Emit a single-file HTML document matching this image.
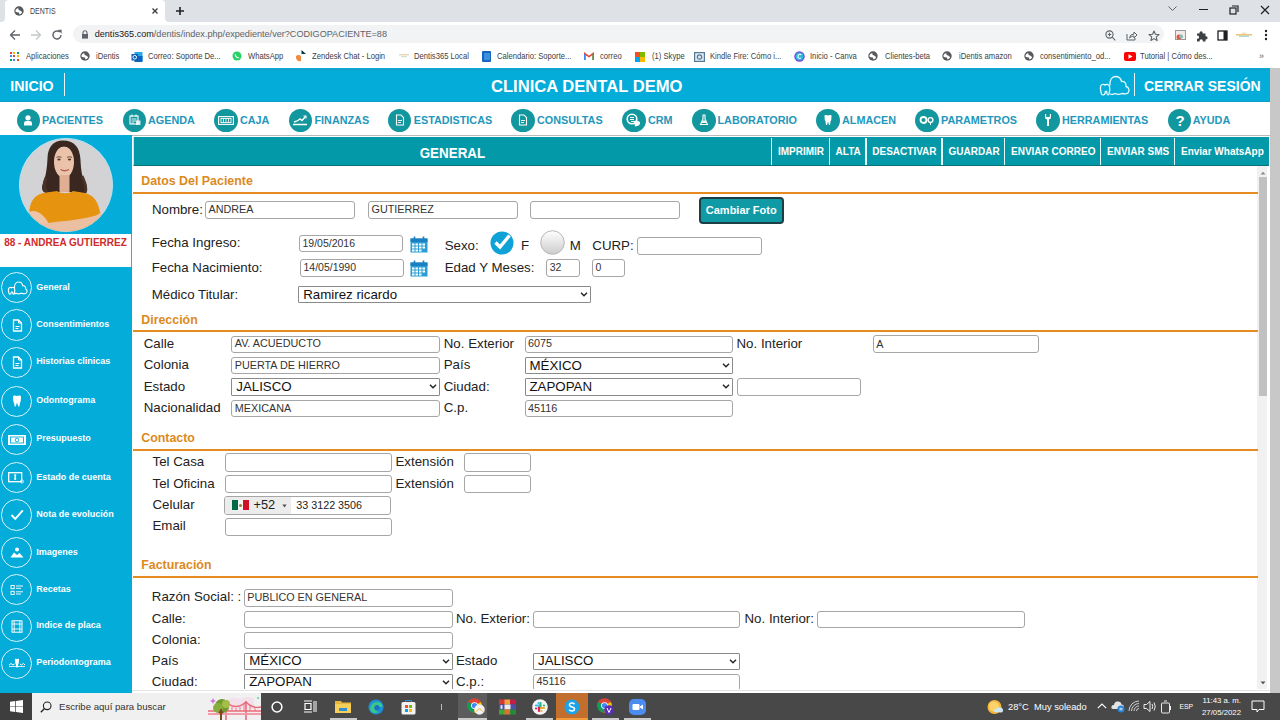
<!DOCTYPE html>
<html><head><meta charset="utf-8"><title>DENTIS</title>
<style>
html,body{margin:0;padding:0;width:1280px;height:720px;overflow:hidden;background:#fff;position:relative}
.a{position:absolute}
.t{position:absolute;white-space:nowrap;line-height:1;font-family:"Liberation Sans",sans-serif}
.inp{position:absolute;box-sizing:border-box;border:1px solid #a6a6a6;border-radius:3px;background:#fff}
.sel{position:absolute;box-sizing:border-box;border:1px solid #8a8a8a;border-radius:1px;background:#fff}
svg{overflow:visible}
</style></head><body>
<div class="a" style="left:0.00px;top:0.00px;width:1280.00px;height:22.00px;background:#dee1e6"></div>
<div class="a" style="left:1.00px;top:17.00px;width:168.00px;height:5.00px;background:#fff"></div>
<div class="a" style="left:0.00px;top:0.00px;width:5.00px;height:22.00px;background:#dee1e6;border-bottom-right-radius:4px"></div>
<div class="a" style="left:165.00px;top:0.00px;width:115.00px;height:22.00px;background:#dee1e6;border-bottom-left-radius:4px"></div>
<div class="a" style="left:5.00px;top:0.00px;width:160.00px;height:22.00px;background:#fff;border-radius:4px 4px 0 0"></div>
<svg class="a" style="left:13.5px;top:6px" width="10" height="10" viewBox="0 0 10 10"><circle cx="5" cy="5" r="4.7" fill="#55585c"/><path d="M1.6 4Q3 1.8 4.3 2.3L4.7 4Q6.9 4.3 8.2 6.3Q7.3 8.3 5.6 8.6L4.8 6.4Q2.8 6.2 1.4 5.4Z" fill="#fff"/></svg>
<div class="t" style="left:29.60px;top:6.75px;font-size:8.3px;color:#3c4043;transform:scaleX(0.84);transform-origin:0 0">DENTIS</div>
<svg class="a" style="left:151.6px;top:8.25px" width="6" height="6" viewBox="0 0 6 6"><path d="M0.5 0.5L5.5 5.5M5.5 0.5L0.5 5.5" stroke="#3c4043" stroke-width="1.4"/></svg>
<svg class="a" style="left:176px;top:7.25px" width="8" height="8" viewBox="0 0 8 8"><path d="M4 0V8M0 4H8" stroke="#202124" stroke-width="1.6"/></svg>
<svg class="a" style="left:1168px;top:6px" width="9" height="6" viewBox="0 0 9 6"><path d="M0.5 0.5L4.5 4.5L8.5 0.5" stroke="#5f6368" stroke-width="1" fill="none"/></svg>
<div class="a" style="left:1199.00px;top:9.00px;width:9.00px;height:1.20px;background:#202124"></div>
<svg class="a" style="left:1229px;top:5px" width="10" height="10" viewBox="0 0 10 10"><rect x="1" y="3" width="6" height="6" fill="none" stroke="#202124" stroke-width="1.2"/><path d="M3 1H9V7" fill="none" stroke="#202124" stroke-width="1.2"/></svg>
<svg class="a" style="left:1259.5px;top:4.5px" width="10" height="10" viewBox="0 0 10 10"><path d="M1 1L9 9M9 1L1 9" stroke="#202124" stroke-width="1.2"/></svg>
<div class="a" style="left:0.00px;top:22.00px;width:1280.00px;height:24.00px;background:#fff"></div>
<svg class="a" style="left:9px;top:29px" width="12" height="12" viewBox="0 0 12 12"><path d="M11 6H1.5M6 1.5L1.5 6L6 10.5" stroke="#5f6368" stroke-width="1.3" fill="none"/></svg>
<svg class="a" style="left:30px;top:29px" width="12" height="12" viewBox="0 0 12 12"><path d="M1 6H10.5M6 1.5L10.5 6L6 10.5" stroke="#c4c7c9" stroke-width="1.3" fill="none"/></svg>
<svg class="a" style="left:51px;top:29px" width="12" height="12" viewBox="0 0 12 12"><path d="M10 6A4 4 0 1 1 8.8 3.1" stroke="#5f6368" stroke-width="1.4" fill="none"/><path d="M6.8 0.8H10.6V4.6Z" fill="#5f6368"/></svg>
<div class="a" style="left:73.00px;top:25.30px;width:1091.00px;height:18.20px;background:#f1f3f4;border-radius:9px"></div>
<svg class="a" style="left:81px;top:30px" width="8" height="9" viewBox="0 0 8 9"><path d="M2 4V2.8A2 2 0 0 1 6 2.8V4" stroke="#5f6368" stroke-width="1.1" fill="none"/><rect x="1" y="4" width="6" height="4.6" fill="#5f6368"/></svg>
<div class="t" style="left:94.7px;top:29.6px;font-size:9.1px;color:#5f6368;letter-spacing:0px"><span style="color:#202124">dentis365.com</span>/dentis/index.php/expediente/ver?CODIGOPACIENTE=88</div>
<svg class="a" style="left:1105px;top:30px" width="11" height="11" viewBox="0 0 11 11"><circle cx="4.5" cy="4.5" r="3.6" stroke="#5f6368" stroke-width="1.1" fill="none"/><path d="M7.2 7.2L10.3 10.3M4.5 2.8V6.2M2.8 4.5H6.2" stroke="#5f6368" stroke-width="1.1"/></svg>
<svg class="a" style="left:1126px;top:30px" width="12" height="11" viewBox="0 0 12 11"><path d="M1 4V10H9V8" stroke="#5f6368" stroke-width="1" fill="none"/><path d="M3.5 8Q4 4 8 4V2L11 5L8 8V6Q5.5 6 3.5 8Z" stroke="#5f6368" stroke-width="1" fill="none"/></svg>
<svg class="a" style="left:1147.5px;top:29.5px" width="12" height="12" viewBox="0 0 12 12"><path d="M6 1L7.4 4.3L11 4.6L8.3 6.9L9.1 10.5L6 8.6L2.9 10.5L3.7 6.9L1 4.6L4.6 4.3Z" stroke="#5f6368" stroke-width="1.1" fill="none" stroke-linejoin="round"/></svg>
<svg class="a" style="left:1175px;top:30px" width="11" height="10" viewBox="0 0 11 10"><rect x="0.5" y="0.5" width="10" height="9" fill="#f3e9e6" stroke="#9a9a9a"/><circle cx="4" cy="7" r="2.5" fill="#e0553a"/><circle cx="6" cy="6.5" r="2" fill="#8bb"/></svg>
<svg class="a" style="left:1195.5px;top:29.5px" width="12" height="12" viewBox="0 0 12 12"><path d="M1 3.5H3.5V2.8A1.6 1.6 0 0 1 6.7 2.8V3.5H9.5V6.2H10A1.6 1.6 0 0 1 10 9.4H9.5V11.5H6.8V10.8A1.6 1.6 0 0 0 3.6 10.8V11.5H1V8.8H1.5A1.6 1.6 0 0 0 1.5 5.6H1Z" fill="#3c4043"/></svg>
<svg class="a" style="left:1217px;top:30px" width="11" height="11" viewBox="0 0 11 11"><rect x="1" y="1" width="9" height="9" fill="none" stroke="#202124" stroke-width="1.3"/><rect x="6.5" y="1" width="3.5" height="9" fill="#202124"/></svg>
<svg class="a" style="left:1236px;top:32px" width="16" height="6" viewBox="0 0 16 6"><rect x="0" y="2" width="16" height="1.6" fill="#f0c27a"/><rect x="3" y="3.6" width="10" height="1.2" fill="#9fd3c7"/><rect x="6" y="0.5" width="4" height="1.5" fill="#f5e0b0"/></svg>
<svg class="a" style="left:1263.5px;top:29px" width="4" height="12" viewBox="0 0 4 12"><circle cx="2" cy="2" r="1.2" fill="#202124"/><circle cx="2" cy="6" r="1.2" fill="#202124"/><circle cx="2" cy="10" r="1.2" fill="#202124"/></svg>
<div class="a" style="left:0.00px;top:46.00px;width:1280.00px;height:22.00px;background:#fff"></div>
<div class="a" style="left:10.00px;top:52.00px;width:2.20px;height:2.20px;background:#db4437"></div>
<div class="a" style="left:13.30px;top:52.00px;width:2.20px;height:2.20px;background:#f4b400"></div>
<div class="a" style="left:16.60px;top:52.00px;width:2.20px;height:2.20px;background:#0f9d58"></div>
<div class="a" style="left:10.00px;top:55.30px;width:2.20px;height:2.20px;background:#4285f4"></div>
<div class="a" style="left:13.30px;top:55.30px;width:2.20px;height:2.20px;background:#db4437"></div>
<div class="a" style="left:16.60px;top:55.30px;width:2.20px;height:2.20px;background:#f4b400"></div>
<div class="a" style="left:10.00px;top:58.60px;width:2.20px;height:2.20px;background:#0f9d58"></div>
<div class="a" style="left:13.30px;top:58.60px;width:2.20px;height:2.20px;background:#4285f4"></div>
<div class="a" style="left:16.60px;top:58.60px;width:2.20px;height:2.20px;background:#db4437"></div>
<div class="t" style="left:25.75px;top:52.11px;font-size:8.6px;color:#3c4043;transform:scaleX(0.89);transform-origin:0 0">Aplicaciones</div>
<svg class="a" style="left:79.8px;top:50.8px" width="10" height="10" viewBox="0 0 10 10"><circle cx="5" cy="5" r="4.7" fill="#55585c"/><path d="M1.6 4Q3 1.8 4.3 2.3L4.7 4Q6.9 4.3 8.2 6.3Q7.3 8.3 5.6 8.6L4.8 6.4Q2.8 6.2 1.4 5.4Z" fill="#fff"/></svg>
<div class="t" style="left:96.25px;top:52.11px;font-size:8.6px;color:#3c4043;transform:scaleX(0.89);transform-origin:0 0">iDentis</div>
<svg class="a" style="left:130.5px;top:50.5px" width="12" height="12" viewBox="0 0 12 12"><rect x="3.5" y="1" width="8" height="9" fill="#28a8ea"/><rect x="3.5" y="5" width="8" height="6" fill="#0a64c0"/><rect x="0.5" y="3" width="6.5" height="6.5" fill="#0f5fb0"/><circle cx="3.75" cy="6.25" r="1.8" fill="none" stroke="#fff" stroke-width="1"/></svg>
<div class="t" style="left:147.50px;top:52.11px;font-size:8.6px;color:#3c4043;transform:scaleX(0.89);transform-origin:0 0">Correo: Soporte De...</div>
<svg class="a" style="left:232px;top:51px" width="10" height="10" viewBox="0 0 10 10"><circle cx="5" cy="5" r="4.5" fill="#25d366"/><path d="M3.3 3.2Q3.5 6.5 6.8 6.8" stroke="#fff" stroke-width="1.2" fill="none"/></svg>
<div class="t" style="left:248.25px;top:52.11px;font-size:8.6px;color:#3c4043;transform:scaleX(0.89);transform-origin:0 0">WhatsApp</div>
<svg class="a" style="left:296px;top:50px" width="11" height="12" viewBox="0 0 11 12"><path d="M0 6A4 4 0 0 1 5 6V11A4 4 0 0 1 0 6Z" fill="#f08a3c"/><path d="M5.5 0L10 4H5.5Z" fill="#03363d"/></svg>
<div class="t" style="left:312.00px;top:52.11px;font-size:8.6px;color:#3c4043;transform:scaleX(0.89);transform-origin:0 0">Zendesk Chat - Login</div>
<svg class="a" style="left:399px;top:53px" width="10" height="6" viewBox="0 0 10 6"><rect y="1" width="10" height="1.5" fill="#e8d9b8"/><rect x="2" y="3" width="6" height="1.2" fill="#cfe0d5"/></svg>
<div class="t" style="left:414.20px;top:52.11px;font-size:8.6px;color:#3c4043;transform:scaleX(0.89);transform-origin:0 0">Dentis365 Local</div>
<div class="a" style="left:482.00px;top:51.00px;width:9.00px;height:11.00px;background:#1565c0;border-radius:1px"></div>
<div class="a" style="left:484.00px;top:53.00px;width:6.00px;height:7.00px;background:#3b8fe0"></div>
<div class="t" style="left:496.50px;top:52.11px;font-size:8.6px;color:#3c4043;transform:scaleX(0.89);transform-origin:0 0">Calendario: Soporte...</div>
<svg class="a" style="left:584px;top:52px" width="10" height="8" viewBox="0 0 10 8"><path d="M0.8 8V1.5L5 4.6L9.2 1.5V8" stroke="#ea4335" stroke-width="1.6" fill="none"/><path d="M0.8 8V2" stroke="#4285f4" stroke-width="1.6"/><path d="M9.2 8V2" stroke="#34a853" stroke-width="1.6"/></svg>
<div class="t" style="left:599.60px;top:52.11px;font-size:8.6px;color:#3c4043;transform:scaleX(0.89);transform-origin:0 0">correo</div>
<div class="a" style="left:634.60px;top:51.50px;width:5.00px;height:5.00px;background:#f25022"></div>
<div class="a" style="left:640.00px;top:51.50px;width:5.00px;height:5.00px;background:#7fba00"></div>
<div class="a" style="left:634.60px;top:56.90px;width:5.00px;height:5.00px;background:#00a4ef"></div>
<div class="a" style="left:640.00px;top:56.90px;width:5.00px;height:5.00px;background:#ffb900"></div>
<div class="t" style="left:651.90px;top:52.11px;font-size:8.6px;color:#3c4043;transform:scaleX(0.89);transform-origin:0 0">(1) Skype</div>
<svg class="a" style="left:694px;top:51px" width="11" height="11" viewBox="0 0 11 11"><rect x="0.6" y="1.6" width="9.8" height="8.8" fill="#dfeaf2" stroke="#557a95" stroke-width="1.2"/><circle cx="5.5" cy="6" r="2.2" fill="none" stroke="#557a95" stroke-width="1.2"/></svg>
<div class="t" style="left:710.40px;top:52.11px;font-size:8.6px;color:#3c4043;transform:scaleX(0.89);transform-origin:0 0">Kindle Fire: Cómo i...</div>
<svg class="a" style="left:793.5px;top:51px" width="11" height="11" viewBox="0 0 11 11"><circle cx="5.5" cy="5.5" r="5.2" fill="#7d3fe0"/><circle cx="5.5" cy="5.5" r="4" fill="#2bb7d9"/><path d="M7.3 4Q6.5 3 5.3 3.3Q3.6 4 4 6.5Q5 8 7 7" stroke="#fff" stroke-width="1.1" fill="none"/></svg>
<div class="t" style="left:810.00px;top:52.11px;font-size:8.6px;color:#3c4043;transform:scaleX(0.89);transform-origin:0 0">Inicio - Canva</div>
<svg class="a" style="left:867.6999999999999px;top:50.8px" width="10" height="10" viewBox="0 0 10 10"><circle cx="5" cy="5" r="4.7" fill="#55585c"/><path d="M1.6 4Q3 1.8 4.3 2.3L4.7 4Q6.9 4.3 8.2 6.3Q7.3 8.3 5.6 8.6L4.8 6.4Q2.8 6.2 1.4 5.4Z" fill="#fff"/></svg>
<div class="t" style="left:884.60px;top:52.11px;font-size:8.6px;color:#3c4043;transform:scaleX(0.89);transform-origin:0 0">Clientes-beta</div>
<svg class="a" style="left:942.3px;top:50.8px" width="10" height="10" viewBox="0 0 10 10"><circle cx="5" cy="5" r="4.7" fill="#55585c"/><path d="M1.6 4Q3 1.8 4.3 2.3L4.7 4Q6.9 4.3 8.2 6.3Q7.3 8.3 5.6 8.6L4.8 6.4Q2.8 6.2 1.4 5.4Z" fill="#fff"/></svg>
<div class="t" style="left:959.00px;top:52.11px;font-size:8.6px;color:#3c4043;transform:scaleX(0.89);transform-origin:0 0">iDentis amazon</div>
<svg class="a" style="left:1023.8px;top:50.8px" width="10" height="10" viewBox="0 0 10 10"><circle cx="5" cy="5" r="4.7" fill="#55585c"/><path d="M1.6 4Q3 1.8 4.3 2.3L4.7 4Q6.9 4.3 8.2 6.3Q7.3 8.3 5.6 8.6L4.8 6.4Q2.8 6.2 1.4 5.4Z" fill="#fff"/></svg>
<div class="t" style="left:1040.00px;top:52.11px;font-size:8.6px;color:#3c4043;transform:scaleX(0.89);transform-origin:0 0">consentimiento_od...</div>
<div class="a" style="left:1124.00px;top:52.00px;width:12.00px;height:9.00px;background:#f00;border-radius:2px"></div>
<svg class="a" style="left:1128px;top:54px" width="5" height="5" viewBox="0 0 5 5"><path d="M0.5 0.3L4.6 2.5L0.5 4.7Z" fill="#fff"/></svg>
<div class="t" style="left:1140.00px;top:52.11px;font-size:8.6px;color:#3c4043;transform:scaleX(0.89);transform-origin:0 0">Tutorial | Cómo des...</div>
<div class="t" style="left:1259.00px;top:52.15px;font-size:9px;color:#5f6368;">»</div>
<div class="a" style="left:1270.00px;top:68.00px;width:10.00px;height:625.00px;background:#c8c8c8"></div>
<div class="a" style="left:0.00px;top:68.00px;width:1270.00px;height:34.00px;background:#04acd9"></div>
<div class="a" style="left:0.00px;top:68.60px;width:1270.00px;height:1.00px;background:#1a9cc4"></div>
<div class="a" style="left:0.00px;top:101.00px;width:1270.00px;height:1.00px;background:#0d9cc4"></div>
<div class="t" style="left:10.30px;top:78.87px;font-size:14.2px;color:#fff;font-weight:bold;">INICIO</div>
<div class="a" style="left:64.10px;top:72.80px;width:1.30px;height:23.20px;background:#e8f7fc"></div>
<div class="t" style="left:491.00px;top:79.41px;font-size:16.6px;color:#fff;font-weight:bold;">CLINICA DENTAL DEMO</div>
<svg class="a" style="left:1098px;top:75px" width="32" height="22" viewBox="0 0 32 22"><path d="M12 10.5C11.5 4.5 14 1.5 17.5 1.5C21 1.5 23 4 23.5 6.5C26.5 6 28.5 8.5 28 11.5C31 12 32 16 30 18C28.5 19.5 26 19 24 18.5C22 19.5 19 19.5 17 18.5C15.5 19.5 13.5 19.5 12 19" stroke="#e9fbff" stroke-width="1.3" fill="none"/><path d="M3.5 19C2.3 15 2 12 3 10.5C4 9 6 9 7 10C8 9 10 9 11 10.5C12 12 12 15 11 19C10.5 20.3 9.3 20.3 9 18.5L8.6 16.5H7.4L7 18.5C6.6 20.3 4 20.3 3.5 19Z" stroke="#e9fbff" stroke-width="1.3" fill="none"/></svg>
<div class="a" style="left:1134.20px;top:72.80px;width:1.30px;height:23.20px;background:#e8f7fc"></div>
<div class="t" style="left:1144.00px;top:79.20px;font-size:14px;color:#fff;font-weight:bold;">CERRAR SESIÓN</div>
<div class="a" style="left:0.00px;top:102.00px;width:1270.00px;height:33.00px;background:#fff"></div>
<div class="a" style="left:132.00px;top:135.00px;width:1138.00px;height:1.00px;background:#b9b9b9"></div>
<div class="a" style="left:16.80px;top:108.60px;width:23.20px;height:23.20px;background:#12979f;border-radius:50%"></div>
<div class="t" style="left:42.00px;top:114.58px;font-size:10.8px;color:#2397bb;font-weight:bold;">PACIENTES</div>
<div class="a" style="left:123.00px;top:108.60px;width:23.20px;height:23.20px;background:#12979f;border-radius:50%"></div>
<div class="t" style="left:148.00px;top:114.58px;font-size:10.8px;color:#2397bb;font-weight:bold;">AGENDA</div>
<div class="a" style="left:214.40px;top:108.60px;width:23.20px;height:23.20px;background:#12979f;border-radius:50%"></div>
<div class="t" style="left:240.00px;top:114.58px;font-size:10.8px;color:#2397bb;font-weight:bold;">CAJA</div>
<div class="a" style="left:288.80px;top:108.60px;width:23.20px;height:23.20px;background:#12979f;border-radius:50%"></div>
<div class="t" style="left:314.50px;top:114.58px;font-size:10.8px;color:#2397bb;font-weight:bold;">FINANZAS</div>
<div class="a" style="left:388.00px;top:108.60px;width:23.20px;height:23.20px;background:#12979f;border-radius:50%"></div>
<div class="t" style="left:413.75px;top:114.58px;font-size:10.8px;color:#2397bb;font-weight:bold;">ESTADISTICAS</div>
<div class="a" style="left:511.40px;top:108.60px;width:23.20px;height:23.20px;background:#12979f;border-radius:50%"></div>
<div class="t" style="left:537.00px;top:114.58px;font-size:10.8px;color:#2397bb;font-weight:bold;">CONSULTAS</div>
<div class="a" style="left:622.40px;top:108.60px;width:23.20px;height:23.20px;background:#12979f;border-radius:50%"></div>
<div class="t" style="left:648.00px;top:114.58px;font-size:10.8px;color:#2397bb;font-weight:bold;">CRM</div>
<div class="a" style="left:692.40px;top:108.60px;width:23.20px;height:23.20px;background:#12979f;border-radius:50%"></div>
<div class="t" style="left:717.50px;top:114.58px;font-size:10.8px;color:#2397bb;font-weight:bold;">LABORATORIO</div>
<div class="a" style="left:816.40px;top:108.60px;width:23.20px;height:23.20px;background:#12979f;border-radius:50%"></div>
<div class="t" style="left:842.00px;top:114.58px;font-size:10.8px;color:#2397bb;font-weight:bold;">ALMACEN</div>
<div class="a" style="left:915.40px;top:108.60px;width:23.20px;height:23.20px;background:#12979f;border-radius:50%"></div>
<div class="t" style="left:941.00px;top:114.58px;font-size:10.8px;color:#2397bb;font-weight:bold;">PARAMETROS</div>
<div class="a" style="left:1036.40px;top:108.60px;width:23.20px;height:23.20px;background:#12979f;border-radius:50%"></div>
<div class="t" style="left:1062.00px;top:114.58px;font-size:10.8px;color:#2397bb;font-weight:bold;">HERRAMIENTAS</div>
<div class="a" style="left:1167.90px;top:108.60px;width:23.20px;height:23.20px;background:#12979f;border-radius:50%"></div>
<div class="t" style="left:1192.80px;top:114.58px;font-size:10.8px;color:#2397bb;font-weight:bold;">AYUDA</div>
<svg class="a" style="left:22.40px;top:114.20px" width="12" height="12" viewBox="0 0 12 12"><circle cx="6" cy="3.8" r="2.6" fill="#fff"/><path d="M2 11.5V9Q2 7 4.5 7H7.5Q10 7 10 9V11.5Z" fill="#fff"/></svg>
<svg class="a" style="left:128.60px;top:114.20px" width="12" height="12" viewBox="0 0 12 12"><rect x="1" y="2" width="8" height="8" fill="none" stroke="#fff" stroke-width="1.1"/><path d="M2.5 5H7.5M2.5 7H7.5M2.5 9H5" stroke="#fff" stroke-width="0.9"/><rect x="7" y="6.5" width="4.5" height="4.5" fill="#fff" opacity="0.8"/><path d="M3 0.5V3M7 0.5V3" stroke="#fff"/></svg>
<svg class="a" style="left:218.00px;top:115.70px" width="16" height="9" viewBox="0 0 16 9"><rect x="0.6" y="0.6" width="14.8" height="7.8" fill="none" stroke="#fff" stroke-width="1.1"/><rect x="3" y="2.4" width="10" height="4.2" fill="none" stroke="#fff" stroke-width="0.9"/><path d="M5.5 2.4V6.6M8 2.4V6.6M10.5 2.4V6.6" stroke="#fff" stroke-width="0.8"/></svg>
<svg class="a" style="left:292.40px;top:114.20px" width="16" height="12" viewBox="0 0 16 12"><path d="M1 10.5H15M2 8Q6 7 8 5L10 6.5L13.5 2.5" stroke="#fff" stroke-width="1.4" fill="none"/><path d="M11.5 2H14V4.5" stroke="#fff" stroke-width="1.1" fill="none"/></svg>
<svg class="a" style="left:394.60px;top:114.20px" width="10" height="12" viewBox="0 0 10 12"><path d="M1.5 1H6L8.5 3.5V11H1.5Z" fill="none" stroke="#fff" stroke-width="1.1"/><path d="M3 6.5H7M3 8.5H6" stroke="#fff" stroke-width="0.9"/></svg>
<svg class="a" style="left:518.00px;top:114.20px" width="10" height="12" viewBox="0 0 10 12"><path d="M1.5 1H6L8.5 3.5V11H1.5Z" fill="none" stroke="#fff" stroke-width="1.1"/><path d="M3 6.5H7M3 8.5H6" stroke="#fff" stroke-width="0.9"/></svg>
<svg class="a" style="left:626.00px;top:113.20px" width="16" height="14" viewBox="0 0 16 14"><circle cx="6" cy="6" r="4.8" fill="none" stroke="#fff" stroke-width="1.6"/><path d="M4 4.5H8M4 6.5H8M5 8.5H8" stroke="#fff" stroke-width="1"/><path d="M8 8Q11 6.5 14 9Q14.5 12.5 11 13L9 13.5Z" fill="#fff"/></svg>
<svg class="a" style="left:699.00px;top:114.20px" width="10" height="12" viewBox="0 0 10 12"><path d="M3.5 1H6.5M4 1.5V5L1.5 10.5H8.5L6 5V1.5" fill="none" stroke="#fff" stroke-width="1.1"/><path d="M2.5 9H7.5L6.2 6.5H3.8Z" fill="#fff"/></svg>
<svg class="a" style="left:823.00px;top:114.20px" width="10" height="12" viewBox="0 0 10 12"><path d="M1.5 2.5Q1 0.5 3 1Q5 1.8 7 1Q9 0.5 8.5 2.5Q8.5 6 7.5 7.5L7 11H6L5 7.5L4 11H3L2.5 7.5Q1.5 6 1.5 2.5Z" fill="#fff"/></svg>
<svg class="a" style="left:919.00px;top:114.20px" width="16" height="12" viewBox="0 0 16 12"><circle cx="4.5" cy="6" r="3" fill="none" stroke="#fff" stroke-width="1.8"/><circle cx="11.5" cy="6" r="2.4" fill="none" stroke="#fff" stroke-width="1.4"/><path d="M11.5 8.5V11" stroke="#fff" stroke-width="1"/></svg>
<svg class="a" style="left:1044.00px;top:113.20px" width="8" height="14" viewBox="0 0 8 14"><path d="M1 1L1 4Q1 6 3 6.5V13H5V6.5Q7 6 7 4V1L5.8 1V4H2.2V1Z" fill="#fff"/></svg>
<div class="t" style="left:1175.60px;top:112.55px;font-size:15px;color:#fff;font-weight:bold;">?</div>
<div class="a" style="left:0.00px;top:135.00px;width:131.50px;height:558.00px;background:#04acd9"></div>
<svg class="a" style="left:18.5px;top:138px" width="94" height="94" viewBox="0 0 94 94">
<defs><clipPath id="pc"><circle cx="47" cy="47" r="46.3"/></clipPath></defs>
<circle cx="47" cy="47" r="46.6" fill="#d3d3d5" stroke="#b3e1ef" stroke-width="1"/>
<g clip-path="url(#pc)">
<path d="M44 2.5C34 2.5 29 9 28.5 20C28 30 27 38 24 45C22 50 23 54 27 55L38 54L52 54L64 56C68 55 69 51 67 47C63 40 62 32 61.5 22C61 9 55 2.5 44 2.5Z" fill="#3a2720"/>
<path d="M27 40C24 46 25 52 29 55M63 38C66 45 68 50 66 55" stroke="#4a3226" stroke-width="3" fill="none"/>
<ellipse cx="45" cy="24" rx="10" ry="15.8" fill="#ebc3aa"/>
<path d="M33 21C33 8 38 3.5 45 3.5C52 3.5 57 8 57 21C55 12.5 50 8.5 45 8.5C40 8.5 35 12.5 33 21Z" fill="#3a2720"/>
<path d="M40.5 37H50.5V54H40.5Z" fill="#dfae93"/>
<ellipse cx="40" cy="21.5" rx="1.7" ry="1" fill="#5a3a30"/><ellipse cx="50.5" cy="21.5" rx="1.7" ry="1" fill="#5a3a30"/><path d="M37.5 19.3Q40 18.2 42.5 19.3M48 19.3Q50.5 18.2 53 19.3" stroke="#4a3026" stroke-width="0.8" fill="none"/>
<path d="M41.5 31.5Q45.5 34 50 31.5" stroke="#b5604f" stroke-width="1.3" fill="none"/>
<path d="M8 94L10 76C11 64 14 58 24 55L38 53C42 56 50 56 54 53L66 55C76 58 79 64 81 74L85 94Z" fill="#e6940f"/>
<path d="M10 74C15 71 24 74 30 86L28 94L8 94Z" fill="#eec5a8"/>
<path d="M24 86C36 83 56 83 71 79C77 78 81 76 82 73L85 94L24 94Z" fill="#ebc0a2"/>
</g></svg>
<div class="a" style="left:0.00px;top:233.70px;width:131.00px;height:33.00px;background:#fff;border-right:1px solid #8d8d8d"></div>
<div class="t" style="left:4.20px;top:238.10px;font-size:10px;color:#cf2b2b;font-weight:bold;">88 - ANDREA GUTIERREZ</div>
<div class="a" style="left:1.20px;top:272.00px;width:31.20px;height:31.20px;border:1.6px solid #d9f3fb;border-radius:50%;box-sizing:border-box"></div>
<div class="t" style="left:36.25px;top:282.65px;font-size:9px;color:#fff;font-weight:bold;">General</div>
<div class="a" style="left:1.20px;top:309.40px;width:31.20px;height:31.20px;border:1.6px solid #d9f3fb;border-radius:50%;box-sizing:border-box"></div>
<div class="t" style="left:36.25px;top:320.05px;font-size:9px;color:#fff;font-weight:bold;">Consentimientos</div>
<div class="a" style="left:1.20px;top:346.60px;width:31.20px;height:31.20px;border:1.6px solid #d9f3fb;border-radius:50%;box-sizing:border-box"></div>
<div class="t" style="left:36.25px;top:357.25px;font-size:9px;color:#fff;font-weight:bold;">Historias clinicas</div>
<div class="a" style="left:1.20px;top:385.50px;width:31.20px;height:31.20px;border:1.6px solid #d9f3fb;border-radius:50%;box-sizing:border-box"></div>
<div class="t" style="left:36.25px;top:396.15px;font-size:9px;color:#fff;font-weight:bold;">Odontograma</div>
<div class="a" style="left:1.20px;top:423.80px;width:31.20px;height:31.20px;border:1.6px solid #d9f3fb;border-radius:50%;box-sizing:border-box"></div>
<div class="t" style="left:36.25px;top:434.45px;font-size:9px;color:#fff;font-weight:bold;">Presupuesto</div>
<div class="a" style="left:1.20px;top:461.90px;width:31.20px;height:31.20px;border:1.6px solid #d9f3fb;border-radius:50%;box-sizing:border-box"></div>
<div class="t" style="left:36.25px;top:472.55px;font-size:9px;color:#fff;font-weight:bold;">Estado de cuenta</div>
<div class="a" style="left:1.20px;top:499.40px;width:31.20px;height:31.20px;border:1.6px solid #d9f3fb;border-radius:50%;box-sizing:border-box"></div>
<div class="t" style="left:36.25px;top:510.05px;font-size:9px;color:#fff;font-weight:bold;">Nota de evolución</div>
<div class="a" style="left:1.20px;top:536.90px;width:31.20px;height:31.20px;border:1.6px solid #d9f3fb;border-radius:50%;box-sizing:border-box"></div>
<div class="t" style="left:36.25px;top:547.55px;font-size:9px;color:#fff;font-weight:bold;">Imagenes</div>
<div class="a" style="left:1.20px;top:574.10px;width:31.20px;height:31.20px;border:1.6px solid #d9f3fb;border-radius:50%;box-sizing:border-box"></div>
<div class="t" style="left:36.25px;top:584.75px;font-size:9px;color:#fff;font-weight:bold;">Recetas</div>
<div class="a" style="left:1.20px;top:610.80px;width:31.20px;height:31.20px;border:1.6px solid #d9f3fb;border-radius:50%;box-sizing:border-box"></div>
<div class="t" style="left:36.25px;top:621.45px;font-size:9px;color:#fff;font-weight:bold;">Indice de placa</div>
<div class="a" style="left:1.20px;top:647.70px;width:31.20px;height:31.20px;border:1.6px solid #d9f3fb;border-radius:50%;box-sizing:border-box"></div>
<div class="t" style="left:36.25px;top:658.35px;font-size:9px;color:#fff;font-weight:bold;">Periodontograma</div>
<svg class="a" style="left:7.00px;top:280.60px" width="20" height="14" viewBox="0 0 20 14"><path d="M7.5 7C7.2 3 9 1 11.5 1C14 1 15.5 3 15.8 4.8C17.8 4.5 19 6 18.7 8C20.5 8.5 20.5 12 18.5 12.5C17 13 15.5 12.5 14 12.2C12.5 13 10.5 13 9 12.2C8.2 12.8 7.5 12.8 7 12.5" stroke="#fff" stroke-width="1.1" fill="none"/><path d="M2 12.5C1.2 10 1.2 8 2 7C2.7 6.2 4 6.2 4.5 6.8C5.2 6.2 6.5 6.2 7.2 7C8 8 8 10 7.2 12.5C6.8 13.5 6 13.3 5.8 12.3L5.4 11H4.4L4 12.3C3.7 13.3 2.5 13.5 2 12.5Z" stroke="#fff" stroke-width="1.1" fill="none"/></svg>
<svg class="a" style="left:11.50px;top:318.50px" width="11" height="13" viewBox="0 0 11 13"><path d="M1.5 1H6.5L9.5 4V12H1.5Z" fill="none" stroke="#fff" stroke-width="1.3"/><path d="M6.5 1V4H9.5" fill="none" stroke="#fff" stroke-width="1"/><path d="M3.5 7.5H7.5M3.5 9.5H6.5" stroke="#fff" stroke-width="1"/></svg>
<svg class="a" style="left:11.50px;top:355.70px" width="11" height="13" viewBox="0 0 11 13"><path d="M1.5 1H6.5L9.5 4V12H1.5Z" fill="none" stroke="#fff" stroke-width="1.3"/><path d="M6.5 1V4H9.5" fill="none" stroke="#fff" stroke-width="1"/><path d="M3.5 7.5H7.5M3.5 9.5H6.5" stroke="#fff" stroke-width="1"/></svg>
<svg class="a" style="left:11.50px;top:395.10px" width="10" height="12" viewBox="0 0 10 12"><path d="M1 2.5Q0.5 0.3 2.8 0.6Q5 1.5 7.2 0.6Q9.5 0.3 9 2.5Q9 6.5 8 8L7.3 11.5H6.3L5 7.5L3.7 11.5H2.7L2 8Q1 6.5 1 2.5Z" fill="#fff"/></svg>
<svg class="a" style="left:8.20px;top:434.90px" width="18" height="10" viewBox="0 0 18 10"><rect x="0" y="0" width="18" height="10" fill="#fff"/><rect x="2.5" y="2" width="13" height="6" fill="none" stroke="#04acd9" stroke-width="0.9"/><circle cx="9" cy="5" r="1.8" fill="none" stroke="#04acd9" stroke-width="0.9"/></svg>
<svg class="a" style="left:8.00px;top:472.00px" width="16" height="11" viewBox="0 0 16 11"><rect x="0.7" y="0.7" width="13" height="9" fill="none" stroke="#fff" stroke-width="1.3"/><path d="M7.2 2.3V8" stroke="#fff" stroke-width="1.4"/><path d="M6 3.3H8.4M6 6.8H8.4" stroke="#fff" stroke-width="0.8"/><circle cx="14" cy="9.5" r="1.6" fill="none" stroke="#fff" stroke-width="0.7"/></svg>
<svg class="a" style="left:10.00px;top:509.00px" width="14" height="12" viewBox="0 0 14 12"><path d="M1.5 6L5.3 9.8L12.8 1.3" stroke="#fff" stroke-width="1.9" fill="none"/></svg>
<svg class="a" style="left:10.00px;top:547.00px" width="14" height="11" viewBox="0 0 14 11"><circle cx="7" cy="2.5" r="2" fill="#fff"/><path d="M0.5 10.5L4 5.5L7 8L9.5 6L13.5 10.5Z" fill="#fff"/></svg>
<svg class="a" style="left:10.00px;top:583.70px" width="14" height="12" viewBox="0 0 14 12"><rect x="1" y="1.5" width="3.2" height="3.2" fill="none" stroke="#fff" stroke-width="0.9"/><rect x="1" y="7.3" width="3.2" height="3.2" fill="none" stroke="#fff" stroke-width="0.9"/><path d="M6 2H13M6 4.3H11M6 7.8H13M6 10H11" stroke="#fff" stroke-width="0.9"/></svg>
<svg class="a" style="left:11.00px;top:619.90px" width="12" height="13" viewBox="0 0 12 13"><rect x="1" y="0.8" width="10" height="11.4" fill="none" stroke="#fff" stroke-width="1"/><path d="M3.2 0.8V12.2M8.8 0.8V12.2M1 4H11M1 9H11" stroke="#fff" stroke-width="0.9"/></svg>
<svg class="a" style="left:8.00px;top:658.30px" width="18" height="10" viewBox="0 0 18 10"><path d="M7 2Q6.5 0.5 8 0.8Q9 1.2 10 0.8Q11.5 0.5 11 2Q11 5 10.2 6.5L9.8 9.5H9.2L9 7L8.8 9.5H8.2L7.8 6.5Q7 5 7 2Z" fill="#fff"/><path d="M1 7L3 5.5L5 7L6.5 6M12 6L13.5 7L15.5 5.5L17 7" stroke="#fff" stroke-width="1" fill="none"/><path d="M1 8.5H17" stroke="#fff" stroke-width="0.8"/></svg>
<div class="a" style="left:132.50px;top:136.00px;width:1137.50px;height:554.00px;background:#fff"></div>
<div class="a" style="left:132.50px;top:137.00px;width:1136.50px;height:29.00px;background:#0499a8;border-bottom:1px solid #0b6f78;border-left:1px solid #b8eef2;box-sizing:border-box"></div>
<div class="t" style="left:419.70px;top:145.99px;font-size:13.4px;color:#fff;font-weight:bold;transform:scaleY(1.07);transform-origin:0 0">GENERAL</div>
<div class="a" style="left:770.80px;top:138.00px;width:1.60px;height:26.50px;background:#e6fbfc"></div>
<div class="a" style="left:828.70px;top:138.00px;width:1.60px;height:26.50px;background:#e6fbfc"></div>
<div class="a" style="left:865.20px;top:138.00px;width:1.60px;height:26.50px;background:#e6fbfc"></div>
<div class="a" style="left:941.00px;top:138.00px;width:1.60px;height:26.50px;background:#e6fbfc"></div>
<div class="a" style="left:1003.60px;top:138.00px;width:1.60px;height:26.50px;background:#e6fbfc"></div>
<div class="a" style="left:1099.80px;top:138.00px;width:1.60px;height:26.50px;background:#e6fbfc"></div>
<div class="a" style="left:1173.80px;top:138.00px;width:1.60px;height:26.50px;background:#e6fbfc"></div>
<div class="t" style="left:777.90px;top:146.70px;font-size:10px;color:#fff;font-weight:bold;">IMPRIMIR</div>
<div class="t" style="left:835.60px;top:146.70px;font-size:10px;color:#fff;font-weight:bold;">ALTA</div>
<div class="t" style="left:872.30px;top:146.70px;font-size:10px;color:#fff;font-weight:bold;">DESACTIVAR</div>
<div class="t" style="left:948.50px;top:146.70px;font-size:10px;color:#fff;font-weight:bold;">GUARDAR</div>
<div class="t" style="left:1011.00px;top:146.70px;font-size:10px;color:#fff;font-weight:bold;">ENVIAR CORREO</div>
<div class="t" style="left:1107.00px;top:146.70px;font-size:10px;color:#fff;font-weight:bold;">ENVIAR SMS</div>
<div class="t" style="left:1181.00px;top:146.70px;font-size:10px;color:#fff;font-weight:bold;">Enviar WhatsApp</div>
<div class="a" style="left:1257.20px;top:166.00px;width:10.30px;height:524.00px;background:#f1f1f1"></div>
<div class="a" style="left:1258.80px;top:176.70px;width:8.00px;height:219.80px;background:#c1c1c1"></div>
<svg class="a" style="left:1259.8px;top:170.5px" width="6" height="4" viewBox="0 0 6 4"><path d="M0.5 3.5L3 0.8L5.5 3.5Z" fill="#8a8a8a"/></svg>
<svg class="a" style="left:1259.8px;top:681px" width="6" height="4" viewBox="0 0 6 4"><path d="M0.5 0.5L3 3.2L5.5 0.5Z" fill="#505050"/></svg>
<div class="t" style="left:141.25px;top:175.24px;font-size:12.4px;color:#dc8a1c;font-weight:bold;">Datos Del Paciente</div>
<div class="a" style="left:132.50px;top:192.00px;width:1125.00px;height:2.20px;background:#e58b1f"></div>
<div class="t" style="left:141.25px;top:313.94px;font-size:12.4px;color:#dc8a1c;font-weight:bold;">Dirección</div>
<div class="a" style="left:132.50px;top:330.20px;width:1125.00px;height:2.20px;background:#e58b1f"></div>
<div class="t" style="left:141.25px;top:431.94px;font-size:12.4px;color:#dc8a1c;font-weight:bold;">Contacto</div>
<div class="a" style="left:132.50px;top:449.00px;width:1125.00px;height:2.20px;background:#e58b1f"></div>
<div class="t" style="left:141.25px;top:558.94px;font-size:12.4px;color:#dc8a1c;font-weight:bold;">Facturación</div>
<div class="a" style="left:132.50px;top:576.00px;width:1125.00px;height:2.20px;background:#e58b1f"></div>
<div class="t" style="left:151.90px;top:202.69px;font-size:13.3px;color:#222;">Nombre:</div>
<div class="inp" style="left:205.00px;top:200.75px;width:150.00px;height:18.00px"></div>
<div class="t" style="left:208.50px;top:204.06px;font-size:10.8px;color:#333;">ANDREA</div>
<div class="inp" style="left:368.00px;top:200.75px;width:150.00px;height:18.00px"></div>
<div class="t" style="left:371.50px;top:204.06px;font-size:10.8px;color:#333;">GUTIERREZ</div>
<div class="inp" style="left:530.00px;top:200.75px;width:150.00px;height:18.00px"></div>
<div class="a" style="left:699.00px;top:197.00px;width:84.50px;height:26.50px;background:#0f9aa6;border:2px solid #1b3f44;border-radius:4px;box-sizing:border-box"></div>
<div class="t" style="left:705.80px;top:204.85px;font-size:11px;color:#fff;font-weight:bold;">Cambiar Foto</div>
<div class="t" style="left:151.70px;top:236.34px;font-size:13.3px;color:#222;">Fecha Ingreso:</div>
<div class="inp" style="left:299.00px;top:234.60px;width:104.00px;height:17.60px"></div>
<div class="t" style="left:302.50px;top:237.87px;font-size:10.5px;color:#333;">19/05/2016</div>
<div class="t" style="left:151.70px;top:260.59px;font-size:13.3px;color:#222;">Fecha Nacimiento:</div>
<div class="inp" style="left:300.00px;top:258.50px;width:104.00px;height:18.30px"></div>
<div class="t" style="left:303.50px;top:262.12px;font-size:10.5px;color:#333;">14/05/1990</div>
<svg class="a" style="left:409.5px;top:235.5px" width="18" height="17" viewBox="0 0 18 17"><rect x="0.5" y="2.5" width="17" height="14" fill="#2a9fd6"/><rect x="0.5" y="2.5" width="17" height="3.5" fill="#1b7fbf"/><path d="M4.5 0.5V4M13.5 0.5V4" stroke="#1b7fbf" stroke-width="1.6"/><g fill="#fff"><rect x="2" y="7.5" width="2.5" height="2"/><rect x="5.5" y="7.5" width="2.5" height="2"/><rect x="9" y="7.5" width="2.5" height="2"/><rect x="12.5" y="7.5" width="2.5" height="2"/><rect x="2" y="10.5" width="2.5" height="2"/><rect x="5.5" y="10.5" width="2.5" height="2"/><rect x="9" y="10.5" width="2.5" height="2"/><rect x="12.5" y="10.5" width="2.5" height="2"/><rect x="2" y="13.5" width="2.5" height="2"/><rect x="5.5" y="13.5" width="2.5" height="2"/><rect x="9" y="13.5" width="2.5" height="2"/></g></svg>
<svg class="a" style="left:409.5px;top:259.5px" width="18" height="17" viewBox="0 0 18 17"><rect x="0.5" y="2.5" width="17" height="14" fill="#2a9fd6"/><rect x="0.5" y="2.5" width="17" height="3.5" fill="#1b7fbf"/><path d="M4.5 0.5V4M13.5 0.5V4" stroke="#1b7fbf" stroke-width="1.6"/><g fill="#fff"><rect x="2" y="7.5" width="2.5" height="2"/><rect x="5.5" y="7.5" width="2.5" height="2"/><rect x="9" y="7.5" width="2.5" height="2"/><rect x="12.5" y="7.5" width="2.5" height="2"/><rect x="2" y="10.5" width="2.5" height="2"/><rect x="5.5" y="10.5" width="2.5" height="2"/><rect x="9" y="10.5" width="2.5" height="2"/><rect x="12.5" y="10.5" width="2.5" height="2"/><rect x="2" y="13.5" width="2.5" height="2"/><rect x="5.5" y="13.5" width="2.5" height="2"/><rect x="9" y="13.5" width="2.5" height="2"/></g></svg>
<div class="t" style="left:444.70px;top:239.24px;font-size:13.3px;color:#222;">Sexo:</div>
<svg class="a" style="left:490px;top:230.5px" width="24" height="24" viewBox="0 0 24 24"><circle cx="12" cy="12" r="11.5" fill="#0fa2d6"/><path d="M5.5 11.5L10 16L19.5 4.5" stroke="#fff" stroke-width="3.4" fill="none"/></svg>
<div class="t" style="left:520.90px;top:238.94px;font-size:13.3px;color:#222;">F</div>
<svg class="a" style="left:539.5px;top:229.5px" width="25" height="25" viewBox="0 0 25 25"><defs><linearGradient id="rg" x1="0" y1="0" x2="0" y2="1"><stop offset="0" stop-color="#ffffff"/><stop offset="1" stop-color="#cccccc"/></linearGradient></defs><circle cx="12.5" cy="12.5" r="11.8" fill="url(#rg)" stroke="#b0b0b0" stroke-width="0.9"/></svg>
<div class="t" style="left:569.70px;top:238.94px;font-size:13.3px;color:#222;">M</div>
<div class="t" style="left:592.30px;top:239.34px;font-size:13.3px;color:#222;">CURP:</div>
<div class="inp" style="left:637.00px;top:236.50px;width:125.00px;height:18.50px"></div>
<div class="t" style="left:444.70px;top:260.59px;font-size:13.3px;color:#222;">Edad Y Meses:</div>
<div class="inp" style="left:546.25px;top:258.50px;width:33.25px;height:18.30px"></div>
<div class="t" style="left:549.75px;top:262.12px;font-size:10.5px;color:#333;">32</div>
<div class="inp" style="left:592.00px;top:258.50px;width:33.20px;height:18.30px"></div>
<div class="t" style="left:595.50px;top:262.12px;font-size:10.5px;color:#333;">0</div>
<div class="t" style="left:151.70px;top:287.54px;font-size:13.3px;color:#222;">Médico Titular:</div>
<div class="sel" style="left:298.20px;top:285.80px;width:293.00px;height:17.60px"></div>
<div class="t" style="left:303.20px;top:287.84px;font-size:13.3px;color:#111;">Ramirez ricardo</div>
<svg class="a" style="left:580.20px;top:292.10px" width="8" height="5" viewBox="0 0 8 5"><path d="M1 0.8L4 3.8L7 0.8" stroke="#222" stroke-width="1.4" fill="none"/></svg>
<div class="t" style="left:143.75px;top:336.94px;font-size:13.3px;color:#222;">Calle</div>
<div class="inp" style="left:231.25px;top:335.50px;width:208.25px;height:17.00px"></div>
<div class="t" style="left:234.75px;top:338.31px;font-size:10.8px;color:#333;">AV. ACUEDUCTO</div>
<div class="t" style="left:143.75px;top:358.44px;font-size:13.3px;color:#222;">Colonia</div>
<div class="inp" style="left:231.25px;top:356.75px;width:208.25px;height:17.50px"></div>
<div class="t" style="left:234.75px;top:359.81px;font-size:10.8px;color:#333;">PUERTA DE HIERRO</div>
<div class="t" style="left:143.75px;top:379.82px;font-size:13.3px;color:#222;">Estado</div>
<div class="sel" style="left:231.25px;top:378.25px;width:208.25px;height:17.25px"></div>
<div class="t" style="left:236.25px;top:380.12px;font-size:13.3px;color:#111;">JALISCO</div>
<svg class="a" style="left:428.50px;top:384.38px" width="8" height="5" viewBox="0 0 8 5"><path d="M1 0.8L4 3.8L7 0.8" stroke="#222" stroke-width="1.4" fill="none"/></svg>
<div class="t" style="left:143.75px;top:401.19px;font-size:13.3px;color:#222;">Nacionalidad</div>
<div class="inp" style="left:231.25px;top:399.50px;width:208.25px;height:17.50px"></div>
<div class="t" style="left:234.75px;top:402.56px;font-size:10.8px;color:#333;">MEXICANA</div>
<div class="t" style="left:443.75px;top:336.94px;font-size:13.3px;color:#222;">No. Exterior</div>
<div class="inp" style="left:524.50px;top:335.50px;width:208.00px;height:17.00px"></div>
<div class="t" style="left:528.00px;top:338.31px;font-size:10.8px;color:#333;">6075</div>
<div class="t" style="left:443.75px;top:358.44px;font-size:13.3px;color:#222;">País</div>
<div class="sel" style="left:524.50px;top:356.75px;width:208.00px;height:17.50px"></div>
<div class="t" style="left:529.50px;top:358.74px;font-size:13.3px;color:#111;">MÉXICO</div>
<svg class="a" style="left:721.50px;top:363.00px" width="8" height="5" viewBox="0 0 8 5"><path d="M1 0.8L4 3.8L7 0.8" stroke="#222" stroke-width="1.4" fill="none"/></svg>
<div class="t" style="left:443.75px;top:379.82px;font-size:13.3px;color:#222;">Ciudad:</div>
<div class="sel" style="left:524.50px;top:378.25px;width:208.00px;height:17.25px"></div>
<div class="t" style="left:529.50px;top:380.12px;font-size:13.3px;color:#111;">ZAPOPAN</div>
<svg class="a" style="left:721.50px;top:384.38px" width="8" height="5" viewBox="0 0 8 5"><path d="M1 0.8L4 3.8L7 0.8" stroke="#222" stroke-width="1.4" fill="none"/></svg>
<div class="t" style="left:443.75px;top:401.19px;font-size:13.3px;color:#222;">C.p.</div>
<div class="inp" style="left:524.50px;top:399.50px;width:208.00px;height:17.50px"></div>
<div class="t" style="left:528.00px;top:402.56px;font-size:10.8px;color:#333;">45116</div>
<div class="t" style="left:736.50px;top:336.94px;font-size:13.3px;color:#222;">No. Interior</div>
<div class="inp" style="left:872.70px;top:335.30px;width:166.00px;height:17.80px"></div>
<div class="t" style="left:876.20px;top:338.51px;font-size:10.8px;color:#333;">A</div>
<div class="inp" style="left:736.50px;top:378.30px;width:124.30px;height:17.30px"></div>
<div class="t" style="left:152.50px;top:455.32px;font-size:13.3px;color:#222;">Tel Casa</div>
<div class="inp" style="left:225.00px;top:453.00px;width:166.50px;height:18.75px"></div>
<div class="t" style="left:152.50px;top:476.69px;font-size:13.3px;color:#222;">Tel Oficina</div>
<div class="inp" style="left:225.00px;top:474.50px;width:166.50px;height:18.50px"></div>
<div class="t" style="left:152.50px;top:498.32px;font-size:13.3px;color:#222;">Celular</div>
<div class="inp" style="left:224.25px;top:496.25px;width:166.25px;height:18.25px"></div>
<div class="a" style="left:225.25px;top:497.25px;width:66.00px;height:16.25px;background:#ececec;border-radius:2px 0 0 2px"></div>
<div class="a" style="left:232.00px;top:499.80px;width:5.70px;height:10.20px;background:#006847"></div>
<div class="a" style="left:237.70px;top:499.80px;width:5.60px;height:10.20px;background:#f4f4f4"></div>
<div class="a" style="left:243.30px;top:499.80px;width:5.70px;height:10.20px;background:#ce1126"></div>
<div class="a" style="left:239.00px;top:503.50px;width:3.00px;height:3.00px;background:#9a7a3a;border-radius:50%"></div>
<div class="t" style="left:253.50px;top:498.88px;font-size:12.8px;color:#222;">+52</div>
<svg class="a" style="left:281.5px;top:503.5px" width="5" height="4" viewBox="0 0 5 4"><path d="M0.3 0.5H4.7L2.5 3.5Z" fill="#555"/></svg>
<div class="t" style="left:296.25px;top:499.89px;font-size:10.75px;color:#222;">33 3122 3506</div>
<div class="t" style="left:152.50px;top:519.44px;font-size:13.3px;color:#222;">Email</div>
<div class="inp" style="left:225.00px;top:517.50px;width:166.50px;height:18.00px"></div>
<div class="t" style="left:395.50px;top:455.32px;font-size:13.3px;color:#222;">Extensión</div>
<div class="inp" style="left:464.40px;top:453.00px;width:66.80px;height:18.75px"></div>
<div class="t" style="left:395.50px;top:476.69px;font-size:13.3px;color:#222;">Extensión</div>
<div class="inp" style="left:464.40px;top:474.50px;width:66.80px;height:18.50px"></div>
<div class="t" style="left:151.80px;top:590.49px;font-size:13.3px;color:#222;">Razón Social: :</div>
<div class="inp" style="left:244.20px;top:588.50px;width:208.50px;height:18.10px"></div>
<div class="t" style="left:247.20px;top:591.86px;font-size:10.8px;color:#333;">PUBLICO EN GENERAL</div>
<div class="t" style="left:151.80px;top:612.04px;font-size:13.3px;color:#222;">Calle:</div>
<div class="inp" style="left:244.20px;top:610.60px;width:208.50px;height:17.00px"></div>
<div class="t" style="left:151.80px;top:633.09px;font-size:13.3px;color:#222;">Colonia:</div>
<div class="inp" style="left:244.20px;top:631.50px;width:208.50px;height:17.30px"></div>
<div class="t" style="left:151.80px;top:654.19px;font-size:13.3px;color:#222;">País</div>
<div class="sel" style="left:244.20px;top:653.00px;width:208.50px;height:16.50px"></div>
<div class="t" style="left:249.20px;top:654.49px;font-size:13.3px;color:#111;">MÉXICO</div>
<svg class="a" style="left:441.70px;top:658.75px" width="8" height="5" viewBox="0 0 8 5"><path d="M1 0.8L4 3.8L7 0.8" stroke="#222" stroke-width="1.4" fill="none"/></svg>
<div class="t" style="left:151.80px;top:674.94px;font-size:13.3px;color:#222;">Ciudad:</div>
<div class="sel" style="left:244.20px;top:673.50px;width:208.50px;height:17.00px"></div>
<div class="t" style="left:249.20px;top:675.24px;font-size:13.3px;color:#111;">ZAPOPAN</div>
<svg class="a" style="left:441.70px;top:679.50px" width="8" height="5" viewBox="0 0 8 5"><path d="M1 0.8L4 3.8L7 0.8" stroke="#222" stroke-width="1.4" fill="none"/></svg>
<div class="t" style="left:456.00px;top:612.04px;font-size:13.3px;color:#222;">No. Exterior:</div>
<div class="inp" style="left:533.00px;top:610.60px;width:207.20px;height:17.00px"></div>
<div class="t" style="left:744.50px;top:612.04px;font-size:13.3px;color:#222;">No. Interior:</div>
<div class="inp" style="left:816.70px;top:610.60px;width:208.00px;height:17.00px"></div>
<div class="t" style="left:456.00px;top:654.19px;font-size:13.3px;color:#222;">Estado</div>
<div class="sel" style="left:533.00px;top:653.00px;width:207.20px;height:16.50px"></div>
<div class="t" style="left:538.00px;top:654.49px;font-size:13.3px;color:#111;">JALISCO</div>
<svg class="a" style="left:729.20px;top:658.75px" width="8" height="5" viewBox="0 0 8 5"><path d="M1 0.8L4 3.8L7 0.8" stroke="#222" stroke-width="1.4" fill="none"/></svg>
<div class="t" style="left:456.00px;top:674.94px;font-size:13.3px;color:#222;">C.p.:</div>
<div class="inp" style="left:533.00px;top:673.50px;width:207.20px;height:17.00px"></div>
<div class="t" style="left:536.50px;top:676.31px;font-size:10.8px;color:#333;">45116</div>
<div class="a" style="left:132.00px;top:689.00px;width:1138.00px;height:4.00px;background:#fff"></div>
<div class="a" style="left:132.00px;top:690.00px;width:1138.00px;height:1.00px;background:#e2e2e2"></div>
<div class="a" style="left:0.00px;top:693.00px;width:1280.00px;height:27.00px;background:#484848"></div>
<div class="a" style="left:0.00px;top:693.00px;width:32.00px;height:27.00px;background:#3e3e3e"></div>
<svg class="a" style="left:10px;top:700px" width="13" height="13" viewBox="0 0 13 13"><path d="M0 1.8L5.3 1.1V6.2H0ZM6 1L13 0V6.2H6ZM0 6.8H5.3V11.9L0 11.2ZM6 6.8H13V13L6 12Z" fill="#fff"/></svg>
<div class="a" style="left:32.00px;top:693.00px;width:229.00px;height:27.00px;background:#f0f0f0"></div>
<svg class="a" style="left:39.5px;top:700.5px" width="12" height="12" viewBox="0 0 12 12"><circle cx="7.2" cy="4.8" r="3.8" stroke="#222" stroke-width="1.1" fill="none"/><path d="M4.5 7.5L0.8 11.2" stroke="#222" stroke-width="1.3"/></svg>
<div class="t" style="left:59.00px;top:701.86px;font-size:9.6px;color:#333;">Escribe aquí para buscar</div>
<svg class="a" style="left:208px;top:695px" width="53" height="25" viewBox="0 0 53 25">
<path d="M16 10Q20 0 32 4Q40 0 46 4L46 14L16 14Z" fill="#f3d8e8" opacity="0.7"/>
<path d="M18 25V6M38 25V6M18 7Q28 16 38 7M38 7Q45 14 53 12M0 16H53" stroke="#ea6b7a" stroke-width="1.6" fill="none"/>
<path d="M20 9V16M24 12V16M28 13V16M32 12V16M36 9V16M42 11V16M47 12V16" stroke="#ea6b7a" stroke-width="0.9"/>
<path d="M0 19H53" stroke="#f29aa8" stroke-width="2"/>
<circle cx="14" cy="11" r="7" fill="#6f9a2e"/><circle cx="10" cy="13" r="5" fill="#88ad3a"/><circle cx="18" cy="9" r="4" fill="#a3bf49"/>
<path d="M13 14V25M11 18L13 16L15 18" stroke="#7a4a22" stroke-width="2" fill="none"/>
<path d="M5 3L6 5L8 6L6 7L5 9L4 7L2 6L4 5Z" fill="#d772e0"/>
<circle cx="50" cy="3" r="1" fill="#56d4a7"/>
</svg>
<svg class="a" style="left:271px;top:700.5px" width="12" height="12" viewBox="0 0 12 12"><circle cx="6" cy="6" r="4.9" stroke="#fff" stroke-width="1.5" fill="none"/></svg>
<svg class="a" style="left:303px;top:700px" width="14" height="13" viewBox="0 0 14 13"><path d="M1 1H9M1 12H9M2 3.5V9.5H8V3.5Z" stroke="#fff" stroke-width="1.2" fill="none"/><path d="M11 1V12M13 1V12" stroke="#fff" stroke-width="1"/></svg>
<svg class="a" style="left:335px;top:699px" width="16" height="14" viewBox="0 0 16 14"><path d="M0 2H6L7 3.5H16V14H0Z" fill="#e8b63a"/><rect x="0" y="5" width="16" height="9" fill="#f6cf5a"/><rect x="4" y="9" width="8" height="3" fill="#2d8fd8"/></svg>
<div class="a" style="left:330.00px;top:718.00px;width:27.00px;height:2.00px;background:#c9c9c9"></div>
<svg class="a" style="left:368px;top:698.5px" width="16" height="16" viewBox="0 0 16 16"><circle cx="8" cy="8" r="7.6" fill="#1d8fd8"/><path d="M2 10Q3 3 9 3Q14 3 14.5 8H6Q6 12 11 13Q4 16 2 10Z" fill="#3fd27a" opacity="0.85"/><circle cx="9" cy="8.5" r="2.5" fill="#1d6fc0"/></svg>
<svg class="a" style="left:401px;top:698.5px" width="15" height="16" viewBox="0 0 15 16"><rect x="0.5" y="3" width="14" height="12.5" rx="1.5" fill="#f2f2f2"/><path d="M4.5 3V1.5H10.5V3" stroke="#2d8fd8" stroke-width="1" fill="none"/><rect x="4" y="6" width="3" height="3" fill="#f25022"/><rect x="8" y="6" width="3" height="3" fill="#7fba00"/><rect x="4" y="10" width="3" height="3" fill="#00a4ef"/><rect x="8" y="10" width="3" height="3" fill="#ffb900"/></svg>
<div class="a" style="left:440.50px;top:704.00px;width:1.00px;height:6.00px;background:#bbb"></div>
<div class="a" style="left:458.00px;top:693.00px;width:29.00px;height:27.00px;background:#5c5c5c"></div>
<svg class="a" style="left:466.50px;top:698.00px" width="15.0" height="15.0" viewBox="0 0 16 16"><circle cx="8" cy="8" r="7.8" fill="#db4437"/><path d="M8 8L1.2 4.2A7.8 7.8 0 0 0 8 15.8Z" fill="#0f9d58"/><path d="M8 8L8 15.8A7.8 7.8 0 0 0 14.8 4.2Z" fill="#f4c20d"/><circle cx="8" cy="8" r="3.6" fill="#fff"/><circle cx="8" cy="8" r="2.8" fill="#4285f4"/></svg>
<svg class="a" style="left:474px;top:704px" width="11" height="11" viewBox="0 0 11 11"><circle cx="5.5" cy="5.5" r="5" fill="#f3f3f3" stroke="#ddd" stroke-width="0.5"/><path d="M2.5 7.5Q5.5 2 8.5 7.5" stroke="#f0b030" stroke-width="1" fill="none"/></svg>
<div class="a" style="left:458.00px;top:718.00px;width:29.00px;height:2.00px;background:#c9c9c9"></div>
<svg class="a" style="left:498.5px;top:698.5px" width="17" height="16" viewBox="0 0 17 16"><rect x="0" y="0.5" width="6" height="5" fill="#d8343a"/><rect x="5.5" y="0.5" width="6" height="5" fill="#eea53a"/><rect x="11" y="0.5" width="6" height="5" fill="#c41e48"/><rect x="0" y="5.5" width="17" height="5" fill="#4a4fb0"/><rect x="5.5" y="5.5" width="6" height="5" fill="#f0ede0"/><rect x="1.5" y="6.2" width="2" height="3.6" fill="#e8e8f0"/><rect x="0" y="10.5" width="6" height="5" fill="#3ca83a"/><rect x="5.5" y="10.5" width="6" height="5" fill="#e2702a"/><rect x="11" y="10.5" width="6" height="5" fill="#238a3a"/></svg>
<div class="a" style="left:509.00px;top:718.00px;width:0.00px;height:0.00px;"></div>
<svg class="a" style="left:531.5px;top:699px" width="16" height="16" viewBox="0 0 16 16"><circle cx="8" cy="8" r="7.8" fill="#f4f4f4"/><path d="M4 6.5H7.5" stroke="#36c5f0" stroke-width="2.2" stroke-linecap="round"/><path d="M8.5 4V7.5" stroke="#2eb67d" stroke-width="2.2" stroke-linecap="round"/><path d="M8.5 9H12" stroke="#ecb22e" stroke-width="2.2" stroke-linecap="round"/><path d="M7 8.5V12" stroke="#e01e5a" stroke-width="2.2" stroke-linecap="round"/><circle cx="6.5" cy="4" r="1.1" fill="#36c5f0"/><circle cx="12" cy="6.5" r="1.1" fill="#2eb67d"/><circle cx="9.5" cy="12" r="1.1" fill="#ecb22e"/><circle cx="4" cy="9.5" r="1.1" fill="#e01e5a"/></svg>
<div class="a" style="left:526.00px;top:718.00px;width:27.00px;height:2.00px;background:#c9c9c9"></div>
<div class="a" style="left:556.00px;top:693.00px;width:32.00px;height:27.00px;background:#c26e2c"></div>
<svg class="a" style="left:564px;top:698.5px" width="16" height="16" viewBox="0 0 16 16"><circle cx="8" cy="8" r="7.6" fill="#1aa3e8"/><path d="M10.5 5.2Q9.5 4 8 4Q5.3 4 5.5 6Q5.8 7.6 8 8Q10.6 8.5 10.5 10Q10.3 12 8 12Q6 12 5.2 10.6" stroke="#fff" stroke-width="1.6" fill="none"/></svg>
<div class="a" style="left:556.00px;top:718.00px;width:32.00px;height:2.00px;background:#f39a3a"></div>
<svg class="a" style="left:596.50px;top:698.00px" width="15.0" height="15.0" viewBox="0 0 16 16"><circle cx="8" cy="8" r="7.8" fill="#db4437"/><path d="M8 8L1.2 4.2A7.8 7.8 0 0 0 8 15.8Z" fill="#0f9d58"/><path d="M8 8L8 15.8A7.8 7.8 0 0 0 14.8 4.2Z" fill="#f4c20d"/><circle cx="8" cy="8" r="3.6" fill="#fff"/><circle cx="8" cy="8" r="2.8" fill="#4285f4"/></svg>
<svg class="a" style="left:604px;top:705px" width="10" height="10" viewBox="0 0 10 10"><circle cx="5" cy="5" r="4.8" fill="#5b2fb5"/><path d="M3 3L5 7.5L7 3" stroke="#fff" stroke-width="1" fill="none"/></svg>
<div class="a" style="left:592.00px;top:718.00px;width:27.00px;height:2.00px;background:#c9c9c9"></div>
<svg class="a" style="left:628.5px;top:698.5px" width="17" height="16" viewBox="0 0 17 16"><rect x="0" y="0" width="17" height="16" rx="5" fill="#4a8cf0"/><rect x="3.5" y="5" width="7" height="6" rx="1" fill="#fff"/><path d="M11 7.5L14 5.5V10.5L11 8.5Z" fill="#fff"/></svg>
<div class="a" style="left:624.00px;top:718.00px;width:27.00px;height:2.00px;background:#c9c9c9"></div>
<svg class="a" style="left:987px;top:699px" width="17" height="16" viewBox="0 0 17 16"><circle cx="7.5" cy="8" r="7" fill="#f5b63a"/><circle cx="7" cy="7.5" r="5" fill="#fbd36a"/><path d="M7 13Q7 9.5 10 9.5Q11 7.5 13.5 8.5Q16.5 9 16 12Q15.5 13.5 14 13.5Z" fill="#cfe6f5"/></svg>
<div class="t" style="left:1008.00px;top:703.21px;font-size:9.3px;color:#fff;">28°C</div>
<div class="t" style="left:1034.00px;top:703.21px;font-size:9.3px;color:#fff;">Muy soleado</div>
<svg class="a" style="left:1097px;top:703px" width="10" height="6" viewBox="0 0 10 6"><path d="M0.8 5.2L5 1L9.2 5.2" stroke="#fff" stroke-width="1.1" fill="none"/></svg>
<svg class="a" style="left:1111px;top:700px" width="15" height="13" viewBox="0 0 15 13"><path d="M2 9Q0 9 0.5 6.5Q1 4.5 3 5Q3.5 1 7 1.5Q10 1.5 10.5 4.5Q13 4.5 13 7Q13 9 11 9Z" fill="#e4e4e4"/><circle cx="10" cy="9" r="3.6" fill="#2a7fd0"/><path d="M8.5 8.3H11.5M8.5 9.8H11.5" stroke="#fff" stroke-width="0.8"/></svg>
<svg class="a" style="left:1128px;top:700px" width="13" height="12" viewBox="0 0 13 12"><path d="M1 11A10 10 0 0 1 11 1M3.5 11A7.5 7.5 0 0 1 11 3.5M6 11A5 5 0 0 1 11 6M8.5 11A2.5 2.5 0 0 1 11 8.5" stroke="#ddd" stroke-width="0.9" fill="none"/></svg>
<svg class="a" style="left:1143px;top:700px" width="14" height="13" viewBox="0 0 14 13"><path d="M1 4.5H3.5L7 1.5V11.5L3.5 8.5H1Z" stroke="#fff" stroke-width="0.9" fill="none"/><path d="M9 4Q10.5 6.5 9 9M11 2.5Q13.5 6.5 11 10.5" stroke="#fff" stroke-width="0.9" fill="none"/></svg>
<svg class="a" style="left:1160px;top:699.5px" width="12" height="14" viewBox="0 0 12 14"><rect x="1.5" y="3" width="8" height="10" rx="1" stroke="#fff" stroke-width="0.9" fill="none"/><path d="M4 1H7M10.5 6V10" stroke="#fff" stroke-width="0.9"/></svg>
<div class="t" style="left:1179.40px;top:703.78px;font-size:6.8px;color:#fff;">ESP</div>
<div class="t" style="left:1202.40px;top:697.13px;font-size:7.8px;color:#fff;">11:43 a. m.</div>
<div class="t" style="left:1202.00px;top:709.43px;font-size:7.8px;color:#fff;">27/05/2022</div>
<svg class="a" style="left:1251px;top:700px" width="14" height="13" viewBox="0 0 14 13"><path d="M1 1H13V9.5H8L6 12V9.5H1Z" stroke="#fff" stroke-width="1" fill="none"/></svg>
</body></html>
